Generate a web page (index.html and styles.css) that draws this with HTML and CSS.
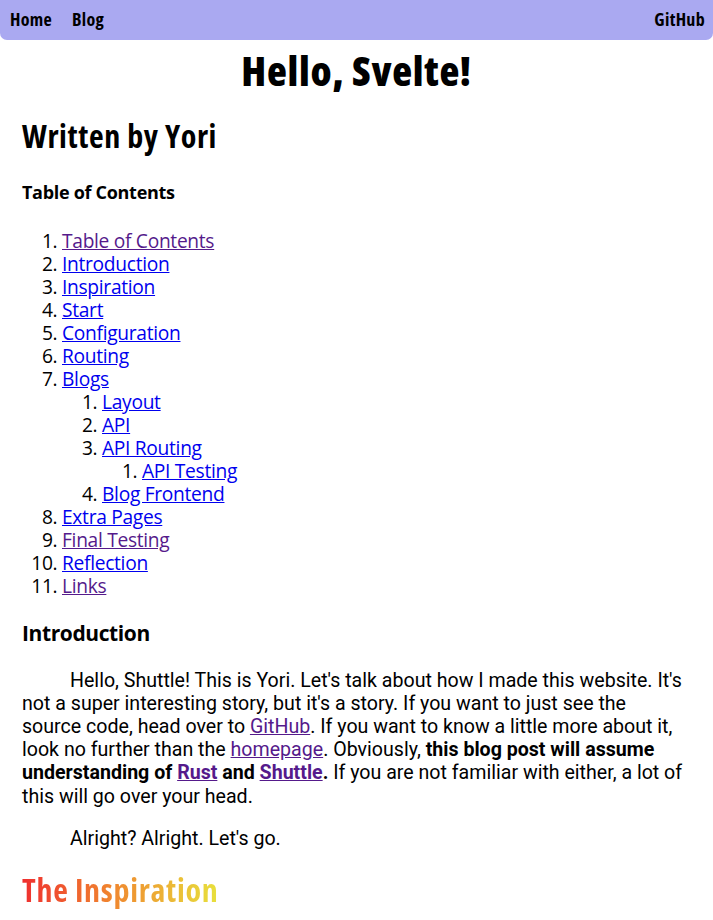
FILE: index.html
```html
<!DOCTYPE html>
<html lang="en">
<head>
<meta charset="utf-8">
<title>Hello, Svelte!</title>
<link rel="stylesheet" href="styles.css">
</head>
<body>
<nav class="nav">
  <div class="nav-left">
    <a class="nav-link" href="#">Home</a>
    <a class="nav-link" href="#">Blog</a>
  </div>
  <a class="nav-link" href="#">GitHub</a>
</nav>
<main class="content">
  <h1 class="title">Hello, Svelte!</h1>
  <article class="post">
    <h1 class="author">Written by Yori</h1>
    <h3 class="toc-title">Table of Contents</h3>
    <ol class="toc">
      <li><a class="visited" href="#">Table of Contents</a></li>
      <li><a href="#">Introduction</a></li>
      <li><a href="#">Inspiration</a></li>
      <li><a href="#">Start</a></li>
      <li><a href="#">Configuration</a></li>
      <li><a href="#">Routing</a></li>
      <li><a href="#">Blogs</a>
        <ol class="toc-sub">
          <li><a href="#">Layout</a></li>
          <li><a href="#">API</a></li>
          <li><a href="#">API Routing</a>
            <ol class="toc-sub">
              <li><a href="#">API Testing</a></li>
            </ol>
          </li>
          <li><a href="#">Blog Frontend</a></li>
        </ol>
      </li>
      <li><a href="#">Extra Pages</a></li>
      <li><a class="visited" href="#">Final Testing</a></li>
      <li><a href="#">Reflection</a></li>
      <li><a class="visited" href="#">Links</a></li>
    </ol>
    <h2 class="section">Introduction</h2>
    <p class="para">Hello, Shuttle! This is Yori. Let's talk about how I made this website. It's<br>not a super interesting story, but it's a story. If you want to just see the<br>source code, head over to <a class="visited" href="#">GitHub</a>. If you want to know a little more about it,<br>look no further than the <a class="visited" href="#">homepage</a>. Obviously, <strong>this blog post will assume<br>understanding of <a class="visited" href="#">Rust</a> and <a class="visited" href="#">Shuttle</a>.</strong> If you are not familiar with either, a lot of<br>this will go over your head.</p>
    <p class="para para-short">Alright? Alright. Let's go.</p>
    <h2 class="gradient">The Inspiration</h2>
  </article>
</main>
</body>
</html>
```

FILE: styles.css
```css
html, body {
  margin: 0;
  padding: 0;
  background: #ffffff;
  color: #000000;
}

body {
  font-family: "Open Sans", "Roboto", sans-serif;
  font-size: 19.2px;
  line-height: 1.2;
}

a {
  color: #0000ee;
}

a.visited {
  color: #551a8b;
}

h1, h2, h3 {
  font-family: "Open Sans", sans-serif;
  font-stretch: 75%;
  line-height: 1.2;
}

.nav {
  display: flex;
  justify-content: space-between;
  align-items: center;
  height: 40px;
  padding: 0 8px 0 10px;
  background: #aaa9f1;
  border-radius: 0 0 7px 7px;
}

.nav-left {
  display: flex;
  gap: 20px;
}

.nav-link {
  color: #000;
  text-decoration: none;
  font-weight: 700;
  font-size: 18px;
  font-stretch: 75%;
  letter-spacing: 0.3px;
}

.content {
  padding: 0 12px 0 22px;
}

.title {
  text-align: center;
  font-size: 41px;
  font-weight: 800;
  letter-spacing: 0.7px;
  margin: 6px 10px 0 0;
}

.author {
  font-size: 32px;
  font-weight: 700;
  letter-spacing: 0.6px;
  margin: 22px 0 0;
}

.toc-title {
  font-size: 18px;
  line-height: 23.4px;
  font-weight: 700;
  font-stretch: 90%;
  letter-spacing: -0.3px;
  margin: 25px 0 0;
}

.toc {
  letter-spacing: -0.3px;
  margin: 25px 0 0;
  padding-left: 40px;
  line-height: 23px;
}

.toc-sub {
  margin: 0;
  padding-left: 40px;
}

.section {
  font-size: 21px;
  line-height: 27.6px;
  font-weight: 700;
  font-stretch: 90%;
  letter-spacing: -0.4px;
  margin: 23px 0 0;
}

.para {
  font-family: "Roboto", sans-serif;
  font-size: 19.6px;
  font-stretch: 90%;
  line-height: 23.2px;
  text-indent: 48px;
  margin: 21px 0 0;
}

.para strong {
  font-weight: 700;
}

.para-short {
  margin-top: 19px;
}

.gradient {
  display: inline-block;
  font-size: 32px;
  font-weight: 700;
  letter-spacing: 0.7px;
  margin: 21px 0 0;
  background: linear-gradient(90deg, #ef2f2f 0%, #f0852f 45%, #e8e03c 100%);
  -webkit-background-clip: text;
  background-clip: text;
  color: transparent;
}
```
